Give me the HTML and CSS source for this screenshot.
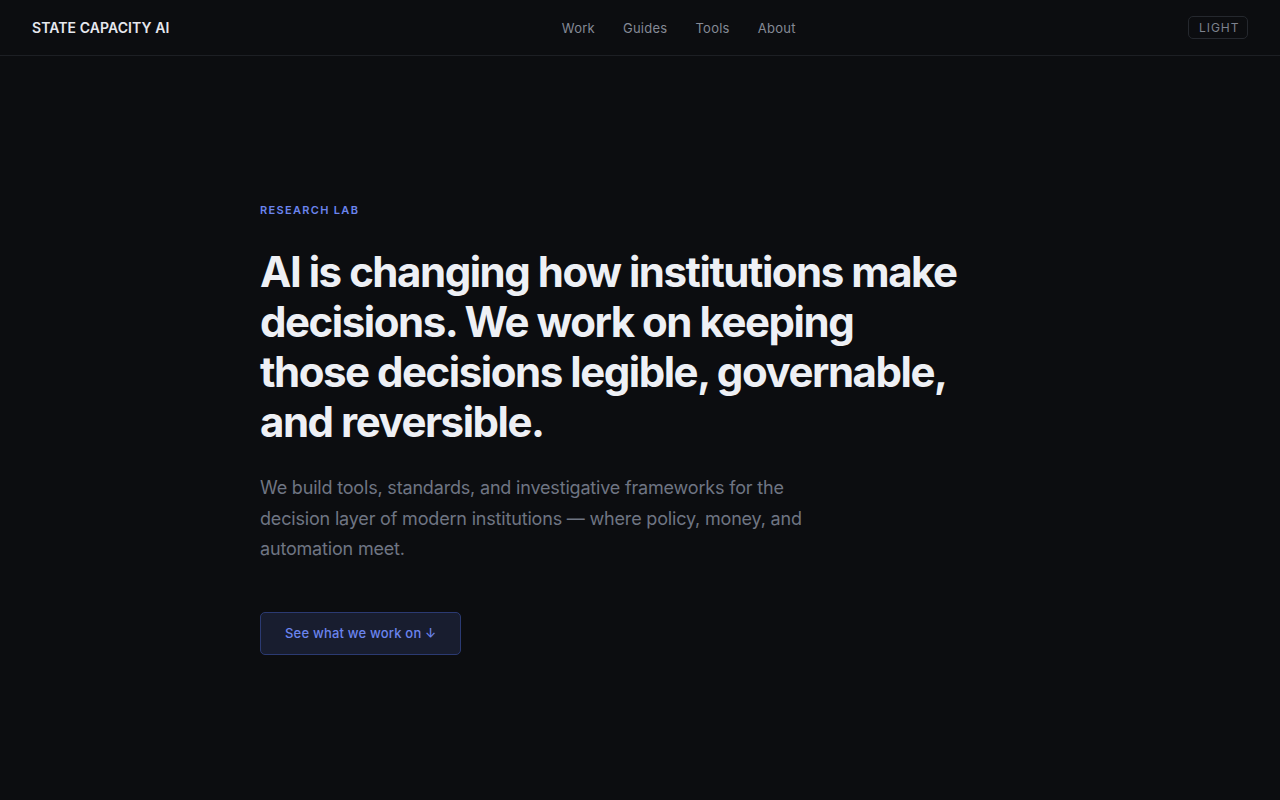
FILE: index.html
```html
<!DOCTYPE html>
<html lang="en">
<head>
<meta charset="utf-8">
<title>State Capacity AI</title>
<link rel="stylesheet" href="styles.css">
</head>
<body>
<header class="site-header">
  <a class="logo" href="#">STATE CAPACITY AI</a>
  <nav class="nav">
    <a href="#">Work</a>
    <a href="#">Guides</a>
    <a href="#">Tools</a>
    <a href="#">About</a>
  </nav>
  <button class="theme-toggle">LIGHT</button>
</header>
<main class="hero">
  <div class="hero-inner">
    <p class="eyebrow">RESEARCH LAB</p>
    <h1 class="headline">AI is changing how institutions make decisions. We work on keeping those decisions legible, governable, and reversible.</h1>
    <p class="lede">We build tools, standards, and investigative frameworks for the decision layer of modern institutions — where policy, money, and automation meet.</p>
    <a class="cta" href="#">See what we work on ↓</a>
  </div>
</main>
</body>
</html>
```

FILE: styles.css
```css
* { box-sizing: border-box; }
html, body { margin: 0; padding: 0; }
body {
  background: #0c0d10;
  color: #eceef3;
  font-family: Inter, "Noto Sans", sans-serif;
  min-height: 800px;
}
a { text-decoration: none; color: inherit; }

.site-header {
  height: 56px;
  border-bottom: 1px solid #1d1f24;
  display: flex;
  align-items: center;
  justify-content: space-between;
  padding: 0 32px;
}
.logo {
  font-size: 14px;
  font-weight: 600;
  letter-spacing: 0.005em;
  color: #e6e8ee;
}
.nav {
  display: flex;
  align-items: center;
  gap: 28px;
}
.nav a {
  font-size: 13px;
  color: #858a96;
  letter-spacing: 0.02em;
}
.theme-toggle {
  background: transparent;
  border: 1px solid #25282e;
  border-radius: 5px;
  color: #7d828e;
  font-family: Inter, sans-serif;
  font-size: 12px;
  letter-spacing: 0.08em;
  padding: 4px 10px;
  height: 23px;
  line-height: 13px;
  width: 60px;
}

.hero {
  display: flex;
  justify-content: center;
  padding-top: 147px;
}
.hero-inner {
  width: 760px;
}
.eyebrow {
  margin: 0;
  font-size: 11px;
  font-weight: 600;
  letter-spacing: 0.12em;
  color: #6b84ee;
  line-height: 14px;
}
.headline {
  margin: 30px 0 0;
  max-width: 704px;
  font-size: 42px;
  line-height: 50px;
  font-weight: 700;
  letter-spacing: -0.035em;
  color: #eef0f5;
}
.lede {
  margin: 26px 0 0;
  font-size: 18px;
  line-height: 30.5px;
  letter-spacing: -0.01em;
  color: #6f7583;
  max-width: 560px;
}
.cta {
  display: inline-flex;
  align-items: center;
  margin-top: 47px;
  height: 43px;
  padding: 0 24px;
  border: 1px solid #2b3a72;
  border-radius: 5px;
  background: #181d2f;
  color: #6b84ee;
  font-size: 13px;
  font-weight: 500;
  letter-spacing: 0.015em;
}
```
